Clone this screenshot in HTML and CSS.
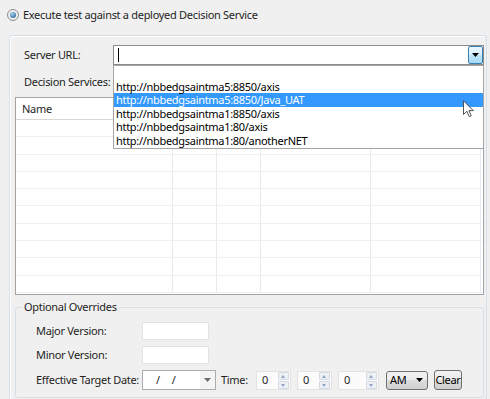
FILE: index.html
```html
<!DOCTYPE html>
<html lang="en">
<head>
<meta charset="UTF-8" />
<title>Decision Service Test</title>
<link rel="stylesheet" href="styles.css">
</head>
<body>
  <label class="radio-row">
    <span class="radio"><span class="radio-dot"></span></span>
    <span>Execute test against a deployed Decision Service</span>
  </label>

  <div class="panel">
    <div class="url-row">
      <span class="field-label">Server URL:</span>
      <div class="combo">
        <div class="combo-field"><span class="caret"></span></div>
        <div class="combo-btn">
          <svg width="7" height="4" viewBox="0 0 7 4"><polygon points="0,0 7,0 3.5,4" fill="#000"/></svg>
        </div>

        <ul class="combo-list">
          <li class="empty"></li>
          <li>http://nbbedgsaintma5:8850/axis</li>
          <li class="selected">http://nbbedgsaintma5:8850/Java_UAT</li>
          <li>http://nbbedgsaintma1:8850/axis</li>
          <li>http://nbbedgsaintma1:80/axis</li>
          <li>http://nbbedgsaintma1:80/anotherNET</li>
        </ul>

        <!-- mouse pointer over the open list -->
        <svg class="cursor" width="11" height="18" viewBox="0 0 12 19">
          <path d="M0.5 0.5 V15.5 L4.2 12 L6.8 17.8 L9 16.8 L6.5 11.3 H11.3 Z" fill="#fff" stroke="#404040" stroke-width="1" stroke-linejoin="round"/>
        </svg>
      </div>
    </div>

    <div class="services-label">Decision Services:</div>

    <div class="grid">
      <div class="grid-head">
        <div class="cell">Name</div><div class="cell"></div><div class="cell"></div><div class="cell"></div><div class="cell"></div><div class="cell last"></div>
      </div>
      <div id="grid-body"></div>
    </div>

    <fieldset class="overrides">
      <legend>Optional Overrides</legend>

      <div class="form-row">
        <span class="form-label">Major Version:</span>
        <div class="text-box"></div>
      </div>
      <div class="form-row">
        <span class="form-label">Minor Version:</span>
        <div class="text-box"></div>
      </div>
      <div class="form-row date-row">
        <span class="form-label">Effective Target Date:</span>
        <div class="date-box">
          <span class="date-part first">/</span><span class="date-part">/</span>
          <span class="date-btn">
            <svg width="7" height="4" viewBox="0 0 7 4"><polygon points="0,0 7,0 3.5,4" fill="#6e6e6e"/></svg>
          </span>
        </div>
        <span class="time-label">Time:</span>
        <div class="spin"><span class="spin-val">0</span><span class="spin-btns"><span class="up"></span><span class="down"></span></span></div>
        <div class="spin"><span class="spin-val">0</span><span class="spin-btns"><span class="up"></span><span class="down"></span></span></div>
        <div class="spin wide"><span class="spin-val">0</span><span class="spin-btns"><span class="up"></span><span class="down"></span></span></div>
        <div class="ampm">AM
          <svg width="7" height="4" viewBox="0 0 7 4"><polygon points="0,0 7,0 3.5,4" fill="#000"/></svg>
        </div>
        <button class="clear-btn">Clear</button>
      </div>
    </fieldset>
  </div>

  <script>
    (function(){
      // ten empty rows in the services table
      const body = document.getElementById('grid-body');
      for (let i = 0; i < 10; i++) {
        const row = document.createElement('div');
        row.className = 'grid-row';
        for (let c = 0; c < 6; c++) {
          const cell = document.createElement('div');
          cell.className = c === 5 ? 'cell last' : 'cell';
          row.appendChild(cell);
        }
        body.appendChild(row);
      }
    })();
  </script>
</body>
</html>
```

FILE: styles.css
```css
/* Reset & base */
*, *::before, *::after {
  box-sizing: border-box;
}
html, body {
  margin: 0;
}
body {
  width: 490px;
  height: 399px;
  overflow: hidden;
  background: #f0f0f0;
  font-family: "Segoe UI", "Noto Sans", sans-serif;
  font-size: 11px;
  letter-spacing: -0.3px;
  line-height: 14px;
  color: #1e1e1e;
  white-space: nowrap;
}

/* Radio option */
.radio-row {
  display: flex;
  align-items: center;
  gap: 4px;
  height: 12px;
  margin: 9px 0 0 7px;
}
.radio {
  width: 12px;
  height: 12px;
  border-radius: 50%;
  border: 1px solid #8e8f8f;
  background: radial-gradient(circle, #ffffff 0, #e2e2e2 100%);
  display: flex;
  align-items: center;
  justify-content: center;
}
.radio-dot {
  width: 6px;
  height: 6px;
  border-radius: 50%;
  background: radial-gradient(circle at 40% 35%, #a8d8f6, #215f8e 85%);
}

/* Group panel */
.panel {
  margin: 14px 0 0 9px;
  width: 478px;
  height: 364px;
  border: 1px solid #d5dfe5;
  border-bottom: none;
  border-radius: 3px 3px 0 0;
  box-shadow: inset 1px 1px 0 #fff;
  padding: 9px 2px 0 5px;
}

.url-row {
  display: flex;
  align-items: center;
  height: 20px;
}
.field-label {
  width: 98px;
  padding-left: 9px;
}

/* Server URL combo */
.combo {
  position: relative;
  width: 371px;
  height: 20px;
  display: flex;
  border: 1px solid #8b8b8b;
  background: #fff;
}
.combo-field {
  flex-grow: 1;
  padding: 2px 0 0 4px;
}
.caret {
  display: block;
  width: 1px;
  height: 14px;
  background: #000;
}
.combo-btn {
  width: 15px;
  height: 18px;
  border: 1px solid #3c7fb1;
  border-radius: 2px;
  background: linear-gradient(#eaf6fd, #d9f0fc 50%, #bee6fd 50%, #a7d9f5);
  display: flex;
  align-items: center;
  justify-content: center;
}
.combo-list {
  position: absolute;
  top: 19px;
  left: -1px;
  width: 371px;
  height: 84px;
  margin: 0;
  padding: 0;
  list-style: none;
  background: #fff;
  border: 1px solid #a5a5a5;
  z-index: 2;
}
.combo-list li {
  height: 13.4px;
  line-height: 13.4px;
  padding-left: 2px;
  color: #000;
}
.combo-list li.empty {
  height: 14px;
}
.combo-list li.selected {
  background: #3399ff;
  color: #fff;
}
.cursor {
  position: absolute;
  left: 349px;
  top: 54px;
  z-index: 3;
}

.services-label {
  margin-top: 9px;
  line-height: 16px;
  padding-left: 9px;
}

/* Services table */
.grid {
  margin-top: 7px;
  height: 198px;
  border: 1px solid #a3a3a3;
  background: #fff;
}
.grid-head, .grid-row {
  display: grid;
  grid-template-columns: 157px 44px 44px 110px 110px 1fr;
}
.grid-head {
  height: 22px;
  border-bottom: 1px solid #d8d8d8;
}
.grid-head .cell {
  padding: 4px 0 0 6px;
  border-right: 1px solid #e3e3e3;
}
.grid-row {
  height: 17.3px;
  border-bottom: 1px solid #f0f0f0;
}
.cell {
  border-right: 1px solid #e6ebf2;
}
.cell.last {
  border-right: none;
}

/* Optional overrides */
.overrides {
  margin: 5px 0 0 0;
  width: 469px;
  border: 1px solid #d5dfe5;
  border-radius: 3px;
  padding: 8px 0 7px 6px;
  display: flex;
  flex-direction: column;
  gap: 6px;
}
.overrides legend {
  padding: 0 2px;
  line-height: 14px;
}
.form-row {
  display: flex;
  align-items: center;
  height: 18px;
  margin-left: 14px;
}
.form-row.date-row {
  height: 20px;
}
.form-label {
  width: 106px;
}
.text-box {
  width: 67px;
  height: 18px;
  background: #fff;
  border: 1px solid #e2e3ea;
}

.date-box {
  width: 74px;
  height: 20px;
  display: flex;
  align-items: center;
  background: #fff;
  border: 1px solid #abadb3;
}
.date-part {
  margin-left: 12px;
}
.date-part.first {
  margin-left: 13px;
}
.date-btn {
  margin-left: auto;
  width: 15px;
  height: 18px;
  background: #f4f4f4;
  display: flex;
  align-items: center;
  justify-content: center;
}

.time-label {
  margin-left: 5px;
  width: 35px;
}
.spin {
  width: 35px;
  height: 19px;
  display: flex;
  align-items: center;
  background: #fbfbfb;
  border: 1px solid #e3e3e3;
}
.spin + .spin {
  margin-left: 6px;
}
.spin.wide {
  width: 41px;
}
.spin-val {
  padding-left: 5px;
}
.spin-btns {
  margin-left: auto;
  margin-right: 1px;
  width: 11px;
  height: 17px;
  display: flex;
  flex-direction: column;
  gap: 1px;
}
.spin-btns span {
  flex: 1;
  border: 1px solid #d3dae3;
  border-radius: 1px;
  background: #edf1f6;
  position: relative;
}
.spin-btns .up::after, .spin-btns .down::after {
  content: "";
  position: absolute;
  left: 2px;
  top: 2px;
  border-left: 2.5px solid transparent;
  border-right: 2.5px solid transparent;
}
.spin-btns .up::after {
  border-bottom: 3px solid #8ea5c3;
}
.spin-btns .down::after {
  border-top: 3px solid #8ea5c3;
}

.ampm, .clear-btn {
  height: 19px;
  border: 1px solid #707070;
  border-radius: 3px;
  background: linear-gradient(#f2f2f2, #ebebeb 50%, #dddddd 50%, #cfcfcf);
  font: inherit;
  letter-spacing: inherit;
  color: #000;
}
.ampm {
  margin-left: 7px;
  width: 42px;
  display: flex;
  align-items: center;
  justify-content: space-between;
  padding: 0 4px 0 3px;
}
.clear-btn {
  margin-left: 6px;
  width: 28px;
  height: 20px;
  padding: 0;
}
```
